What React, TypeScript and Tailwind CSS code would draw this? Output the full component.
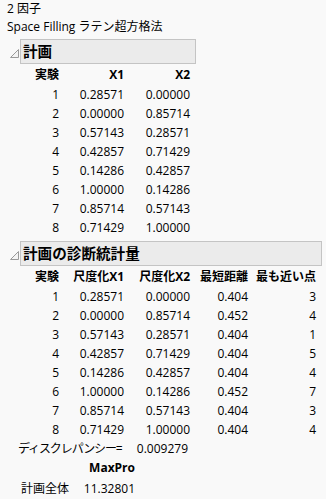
import React from "react";

const font = { fontFamily: '"Open Sans", "Noto Sans CJK JP", sans-serif' };

const t1 = [
  ["1", "0.28571", "0.00000"],
  ["2", "0.00000", "0.85714"],
  ["3", "0.57143", "0.28571"],
  ["4", "0.42857", "0.71429"],
  ["5", "0.14286", "0.42857"],
  ["6", "1.00000", "0.14286"],
  ["7", "0.85714", "0.57143"],
  ["8", "0.71429", "1.00000"],
];

const t2 = [
  ["1", "0.28571", "0.00000", "0.404", "3"],
  ["2", "0.00000", "0.85714", "0.452", "4"],
  ["3", "0.57143", "0.28571", "0.404", "1"],
  ["4", "0.42857", "0.71429", "0.404", "5"],
  ["5", "0.14286", "0.42857", "0.404", "4"],
  ["6", "1.00000", "0.14286", "0.452", "7"],
  ["7", "0.85714", "0.57143", "0.404", "3"],
  ["8", "0.71429", "1.00000", "0.404", "4"],
];

const widths = ["w-[59px]", "w-[65px]", "w-[66px]", "w-[58px]", "w-[68px]"];

function Triangle() {
  return (
    <div className="w-[20px] shrink-0 pt-[10px] pl-[10px]">
      <svg width="9" height="9" viewBox="0 0 9 9">
        <polygon points="0.5,8.5 8.5,0.5 8.5,8.5" fill="#f4f4f4" stroke="#9a9a9a" strokeWidth="1" />
      </svg>
    </div>
  );
}

function Header({ title, w }: { title: string; w: string }) {
  return (
    <div className="flex">
      <Triangle />
      <div className={`${w} h-[25px] border border-[#c4c4c4] bg-[#ebebeb] pl-[2px] font-bold text-[14.6px] leading-[23px] whitespace-nowrap`}>
        {title}
      </div>
    </div>
  );
}

function Row({ cells, bold, h }: { cells: string[]; bold?: boolean; h: string }) {
  return (
    <div className={`flex ${h} items-center ${bold ? "font-bold" : ""}`}>
      {cells.map((c, i) => (
        <div key={i} className={`${widths[i]} text-right whitespace-nowrap`}>
          {c}
        </div>
      ))}
    </div>
  );
}

export default function App() {
  return (
    <div className="w-[326px] h-[499px] overflow-hidden bg-[#f9f9f9] text-black text-[12px]" style={font}>
      <div className="pl-[7px] h-[17px] flex items-center">2 因子</div>
      <div className="pl-[7px] h-[19px] flex items-center whitespace-nowrap">Space Filling ラテン超方格法</div>
      <div className="mt-[3px]">
        <Header title="計画" w="w-[176px]" />
      </div>
      <Row cells={["実験", "X1", "X2"]} bold h="h-[21px]" />
      {t1.map((r, i) => (
        <Row key={i} cells={r} h="h-[19px]" />
      ))}
      <div className="mt-[4px]">
        <Header title="計画の診断統計量" w="w-[302px]" />
      </div>
      <Row cells={["実験", "尺度化X1", "尺度化X2", "最短距離", "最も近い点"]} bold h="h-[21px]" />
      {t2.map((r, i) => (
        <Row key={i} cells={r} h="h-[19px]" />
      ))}
      <div className="flex h-[20px] items-center">
        <div className="pl-[18px] w-[135px] whitespace-nowrap tracking-[-1.1px]">ディスクレパンシー=</div>
        <div className="w-[53px] text-right">0.009279</div>
      </div>
      <div className="flex h-[18px] items-center font-bold">
        <div className="w-[135px] text-right">MaxPro</div>
      </div>
      <div className="flex h-[20px] mt-[2px] items-center">
        <div className="pl-[21px] w-[82px] whitespace-nowrap">計画全体</div>
        <div className="w-[53px] text-right">11.32801</div>
      </div>
    </div>
  );
}
